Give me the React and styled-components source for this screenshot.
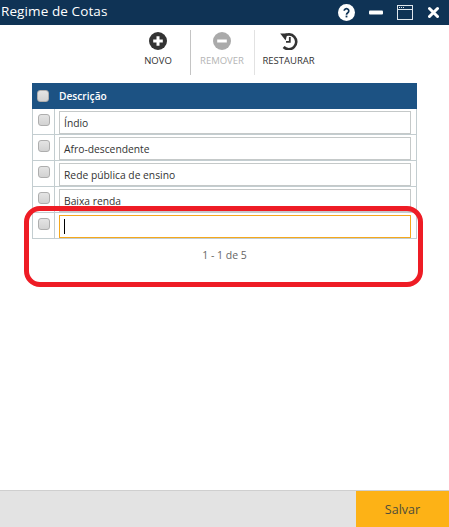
import React from "react";
import styled, { createGlobalStyle } from "styled-components";

const GlobalStyle = createGlobalStyle`
  html, body {
    margin: 0;
    padding: 0;
    background: #fff;
    font-family: "Open Sans", "Liberation Sans", sans-serif;
  }
`;

const Page = styled.div`
  position: relative;
  width: 449px;
  height: 527px;
  display: flex;
  flex-direction: column;
  overflow: hidden;
`;

const TitleBar = styled.header`
  height: 25px;
  background: #0f3355;
  display: flex;
  align-items: center;
  padding: 0 10px 0 1px;
  color: #fff;
`;

const Title = styled.h1`
  flex: 1;
  margin: 0 0 3px;
  font-size: 13.5px;
  font-weight: 400;
  letter-spacing: 0.1px;
`;

const WindowIcons = styled.div`
  display: flex;
  align-items: center;
  gap: 14px;
`;

const Toolbar = styled.div`
  height: 45px;
  margin-top: 5px;
  display: flex;
  justify-content: center;
`;

const ToolButton = styled.div`
  width: ${(p) => p.$width}px;
  display: flex;
  flex-direction: column;
  align-items: center;
  padding-top: 2px;
  gap: 4px;
  box-sizing: border-box;
  font-size: 9.5px;
  line-height: 13px;
  color: ${(p) => (p.$disabled ? "#b5b5b5" : "#333")};
  border-right: ${(p) => (p.$divider ? `1px solid ${p.$divider}` : "0")};
`;

const Table = styled.div`
  margin: 8px 32px 0;
  width: 385px;
`;

const HeaderRow = styled.div`
  height: 26px;
  background: #1c5283;
  display: flex;
  align-items: center;
  color: #fff;
  font-size: 10.2px;
  font-weight: 600;
`;

const HeaderCheckCell = styled.div`
  width: 22px;
  display: flex;
  justify-content: center;
  margin-right: 5px;
`;

const Row = styled.div`
  height: 26px;
  box-sizing: border-box;
  display: grid;
  grid-template-columns: 22px 1fr;
  border: 1px solid #c3cdd0;
  border-top: 0;
`;

const CheckCell = styled.div`
  border-right: 1px solid #c3cdd0;
  display: flex;
  justify-content: center;
  padding-top: 5px;
`;

const Check = styled.span`
  display: block;
  width: 12px;
  height: 12px;
  box-sizing: border-box;
  border: 1px solid #aeaeae;
  border-radius: 3px;
  background: linear-gradient(#e4e4e4, #d2d2d2);
`;

const InputCell = styled.div`
  padding: 2px 5px 0 4px;
`;

const TextBox = styled.div`
  height: 23px;
  box-sizing: border-box;
  border: 1px solid ${(p) => (p.$focused ? "#f5a81c" : "#c5c9c9")};
  padding-left: 4px;
  display: flex;
  align-items: center;
  font-size: 10.3px;
  color: #333;
`;

const Caret = styled.span`
  width: 1px;
  height: 15px;
  background: #000;
`;

const Pagination = styled.div`
  margin-top: 9px;
  text-align: center;
  font-size: 10.5px;
  line-height: 15px;
  color: #666;
`;

const Highlight = styled.div`
  position: absolute;
  left: 24px;
  top: 206px;
  width: 399px;
  height: 81px;
  box-sizing: border-box;
  border: 5px solid #ee1c25;
  border-radius: 16px;
  pointer-events: none;
`;

const Footer = styled.footer`
  margin-top: auto;
  height: 37px;
  box-sizing: border-box;
  background: #e3e3e3;
  border-top: 1px solid #cfcfcf;
  display: flex;
  justify-content: flex-end;
`;

const SaveButton = styled.div`
  width: 93px;
  background: #fdb216;
  display: flex;
  align-items: center;
  justify-content: center;
  font-size: 12.5px;
  color: #4d4d3a;
`;

const HelpIcon = () => (
  <svg width="17" height="17" viewBox="0 0 17 17">
    <circle cx="8.5" cy="8.5" r="8.5" fill="#fff" />
    <path d="M6.2 6.8a2.3 2.2 0 1 1 3.6 1.9c-.9.6-1.3 1-1.3 2" fill="none" stroke="#0f3355" strokeWidth="1.7" />
    <rect x="7.6" y="11.6" width="1.8" height="1.8" fill="#0f3355" />
  </svg>
);

const MinimizeIcon = () => (
  <svg width="14" height="17" viewBox="0 0 14 17">
    <rect x="0" y="6.5" width="14" height="4" rx="1" fill="#fff" />
  </svg>
);

const MaximizeIcon = () => (
  <svg width="16" height="15" viewBox="0 0 16 15">
    <rect x="0.5" y="0.5" width="15" height="14" fill="none" stroke="#dfe6ec" />
    <path d="M1 4.5h14" stroke="#dfe6ec" />
    <path d="M2 2.5h1M4 2.5h1M6 2.5h1" stroke="#dfe6ec" />
  </svg>
);

const CloseIcon = () => (
  <svg width="11" height="17" viewBox="0 0 11 17" style={{ marginLeft: 1 }}>
    <path d="M1.5 4.5l8 8M9.5 4.5l-8 8" stroke="#fff" strokeWidth="3" strokeLinecap="round" />
  </svg>
);

const PlusCircle = ({ color }) => (
  <svg width="18" height="18" viewBox="0 0 18 18">
    <circle cx="9" cy="9" r="9" fill={color} />
    <path d="M9 4.2v9.6M4.2 9h9.6" stroke="#fff" strokeWidth="3" />
  </svg>
);

const MinusCircle = ({ color }) => (
  <svg width="18" height="18" viewBox="0 0 18 18">
    <circle cx="9" cy="9" r="9" fill={color} />
    <path d="M4.2 9h9.6" stroke="#fff" strokeWidth="3" />
  </svg>
);

const RestoreIcon = () => (
  <svg width="18" height="18" viewBox="0 0 18 18">
    <path d="M4 4.2A7.4 7.4 0 1 1 3.6 15" fill="none" stroke="#333" strokeWidth="2.6" />
    <path d="M0.2 1.6H7.4L5.6 8.6z" fill="#333" />
    <path d="M9.8 5v4.8H6" fill="none" stroke="#333" strokeWidth="1.8" />
  </svg>
);

const rows = ["Índio", "Afro-descendente", "Rede pública de ensino", "Baixa renda"];

const App = () => (
  <Page>
    <GlobalStyle />
    <TitleBar>
      <Title>Regime de Cotas</Title>
      <WindowIcons>
        <HelpIcon />
        <MinimizeIcon />
        <MaximizeIcon />
        <CloseIcon />
      </WindowIcons>
    </TitleBar>
    <Toolbar>
      <ToolButton $width={64} $divider="#c4c4c4">
        <PlusCircle color="#333" />
        NOVO
      </ToolButton>
      <ToolButton $width={64} $disabled $divider="#e2e2e2">
        <MinusCircle color="#aaa" />
        REMOVER
      </ToolButton>
      <ToolButton $width={68}>
        <RestoreIcon />
        RESTAURAR
      </ToolButton>
    </Toolbar>
    <Table>
      <HeaderRow>
        <HeaderCheckCell>
          <Check />
        </HeaderCheckCell>
        Descrição
      </HeaderRow>
      {rows.map((label) => (
        <Row key={label}>
          <CheckCell>
            <Check />
          </CheckCell>
          <InputCell>
            <TextBox>{label}</TextBox>
          </InputCell>
        </Row>
      ))}
      <Row>
        <CheckCell>
          <Check />
        </CheckCell>
        <InputCell>
          <TextBox $focused>
            <Caret />
          </TextBox>
        </InputCell>
      </Row>
      <Pagination>1 - 1 de 5</Pagination>
    </Table>
    <Highlight />
    <Footer>
      <SaveButton>Salvar</SaveButton>
    </Footer>
  </Page>
);

export default App;
